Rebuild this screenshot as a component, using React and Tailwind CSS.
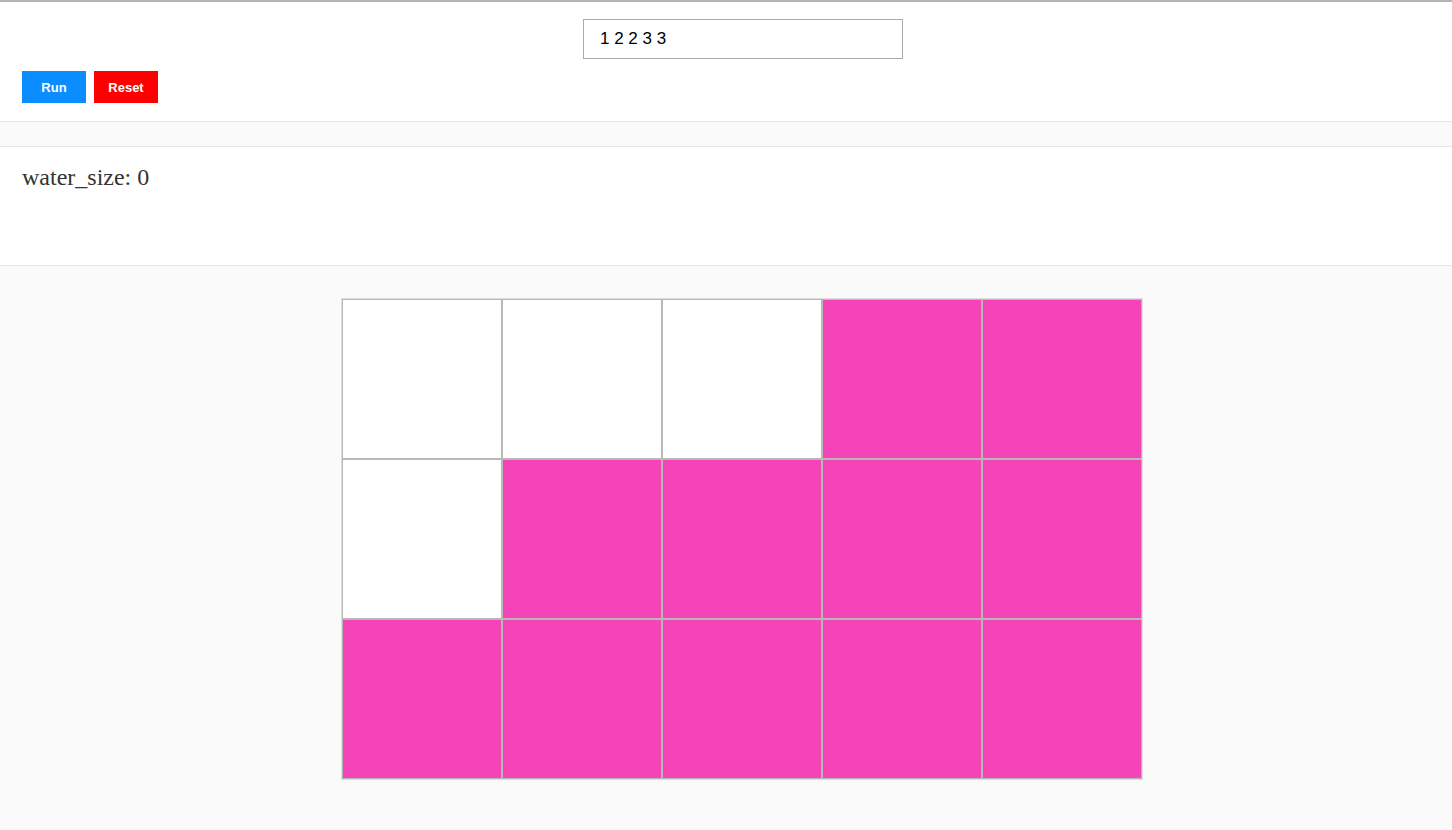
import React from "react";

const heights = [1, 2, 2, 3, 3];
const rows = 3;

export default function App() {
  return (
    <div className="min-h-[830px] bg-[#fafafa] border-t-2 border-[#b4b4b4]" style={{ fontFamily: '"Liberation Sans", Arial, sans-serif' }}>
      <div className="bg-white border-b border-[#e6e6e6] pt-[17px] pb-[18px] px-[22px]">
        <div className="flex justify-center pl-[34px]">
          <input
            defaultValue="1 2 2 3 3"
            className="w-[320px] h-[40px] border border-[#aaaaaa] px-[16px] text-[17px] text-black outline-none"
            style={{ fontFamily: '"Liberation Sans", Arial, sans-serif' }}
          />
        </div>
        <div className="flex gap-[8px] mt-[12px]">
          <button className="w-[64px] h-[32px] bg-[#0b8cff] text-white text-[13px] font-bold pt-[1px]">Run</button>
          <button className="w-[64px] h-[32px] bg-[#ff0000] text-white text-[13px] font-bold pt-[1px]">Reset</button>
        </div>
      </div>
      <div className="h-[25px] bg-[#fafafa] border-b border-[#e6e6e6]"></div>
      <div className="h-[119px] bg-white border-b border-[#e6e6e6] px-[22px] pt-[16px]">
        <div className="text-[24px] text-[#333333] leading-[28px]" style={{ fontFamily: '"Liberation Serif", "Times New Roman", serif' }}>
          water_size: 0
        </div>
      </div>
      <div className="flex justify-center pt-[32px] pb-[51px] pl-[32px]">
        <div className="border border-[#dddddd]">
          {Array.from({ length: rows }).map((_, r) => (
            <div key={r} className="flex">
              {heights.map((h, c) => {
                const filled = h >= rows - r;
                return (
                  <div
                    key={c}
                    className={
                      "w-[160px] h-[160px] border border-[#b8b8b8] " +
                      (filled ? "bg-[#f543b8]" : "bg-white")
                    }
                  />
                );
              })}
            </div>
          ))}
        </div>
      </div>
    </div>
  );
}
